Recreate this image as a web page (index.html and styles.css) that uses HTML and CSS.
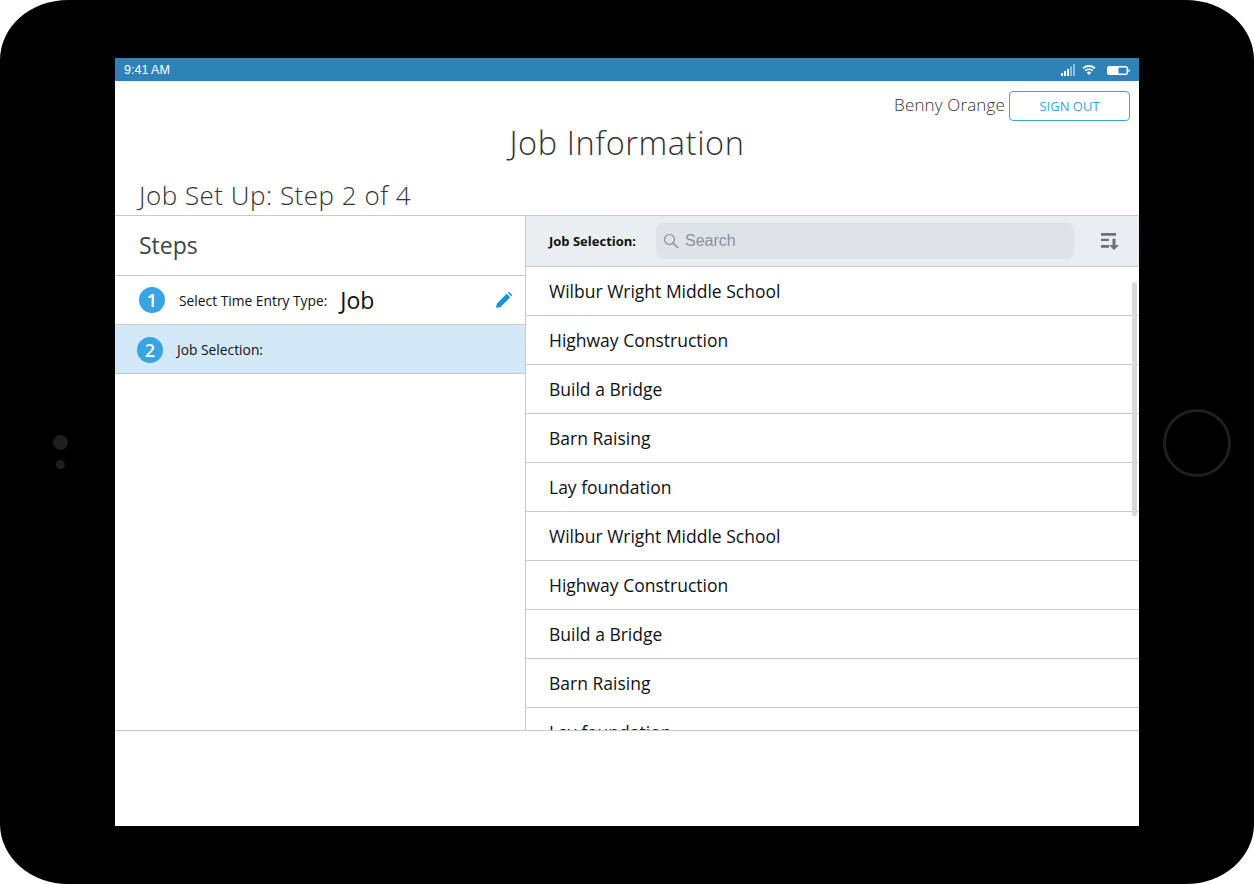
FILE: index.html
```html
<!DOCTYPE html>
<html lang="en">
<head>
<meta charset="utf-8">
<title>Job Information</title>
<link rel="stylesheet" href="styles.css">
</head>
<body>
<div class="device">
  <span class="camera"></span>
  <span class="sensor"></span>
  <span class="home"></span>
  <div class="screen">
    <div class="status">
      <span class="time">9:41 AM</span>
      <div class="status-icons">
        <svg class="signal" width="15" height="12" viewBox="0 0 15 12"><rect x="0" y="9" width="2" height="3" fill="#fff"/><rect x="3" y="7" width="2" height="5" fill="#fff"/><rect x="6" y="5" width="2" height="7" fill="#fff"/><rect x="9" y="2.500" width="2" height="9.500" fill="#8fbcd9"/><rect x="12" y="0" width="2" height="12" fill="#8fbcd9"/></svg>
        <svg class="wifi" width="14" height="10" viewBox="0 0 14 10"><path d="M7 10 4.800 7.400a3.400 3.400 0 0 1 4.400 0ZM3.800 6.300 2.700 5a6.600 6.600 0 0 1 8.600 0l-1.100 1.300a5 5 0 0 0-6.400 0ZM1.700 3.900.5 2.500a10 10 0 0 1 13 0l-1.200 1.400a8.200 8.200 0 0 0-10.600 0Z" fill="#fff"/></svg>
        <svg class="battery" width="23" height="9" viewBox="0 0 23 9"><rect x="0" y="0" width="21" height="9" rx="2.500" fill="#fff"/><rect x="11.500" y="1.500" width="8" height="6" fill="#2d83b8"/><path d="M21.500 2.700c.9.200 1.300.9 1.300 1.800s-.4 1.600-1.300 1.800Z" fill="#fff"/></svg>
      </div>
    </div>
    <div class="top">
      <div class="user">
        <span class="user-name">Benny Orange</span>
        <button class="signout">SIGN OUT</button>
      </div>
      <h1 class="title">Job Information</h1>
      <h2 class="subtitle">Job Set Up: Step 2 of 4</h2>
    </div>
    <div class="main">
      <aside class="steps">
        <div class="steps-head">Steps</div>
        <div class="step">
          <span class="badge">1</span>
          <span class="step-label">Select Time Entry Type:</span>
          <span class="step-value">Job</span>
          <svg class="pencil" width="16" height="16" viewBox="0 0 16 16"><path d="M0 16 1 11.500 10.700 1.800 14.200 5.300 4.500 15ZM11.700.8 12.300.2a.8.8 0 0 1 1.100 0l2.400 2.400a.8.8 0 0 1 0 1.100l-.6.600Z" fill="#0f94d9"/></svg>
        </div>
        <div class="step step-active">
          <span class="badge">2</span>
          <span class="step-label">Job Selection:</span>
        </div>
      </aside>
      <section class="jobs">
        <div class="toolbar">
          <span class="toolbar-label">Job Selection:</span>
          <div class="search">
            <svg width="16" height="16" viewBox="0 0 16 16"><circle cx="6.500" cy="6.500" r="5" fill="none" stroke="#8e9298" stroke-width="1.200"/><path d="M10.200 10.200 15 15" stroke="#8e9298" stroke-width="1.400"/></svg>
            <span class="search-text">Search</span>
          </div>
          <svg class="sort" width="18" height="17" viewBox="0 0 18 17"><path d="M0 0h15v2.700H0ZM0 5.700h8V8H0ZM0 12h8v2.700H0ZM11.500 5.700h3V12H18l-5 5-5-5h3.500Z" fill="#6d7278"/></svg>
        </div>
        <div class="list">
          <div class="row">Wilbur Wright Middle School</div>
          <div class="row">Highway Construction</div>
          <div class="row">Build a Bridge</div>
          <div class="row">Barn Raising</div>
          <div class="row">Lay foundation</div>
          <div class="row">Wilbur Wright Middle School</div>
          <div class="row">Highway Construction</div>
          <div class="row">Build a Bridge</div>
          <div class="row">Barn Raising</div>
          <div class="row">Lay foundation</div>
          <span class="scrollbar"></span>
        </div>
      </section>
    </div>
    <div class="footer"></div>
  </div>
</div>
</body>
</html>
```
FILE: styles.css
```css
* { box-sizing: border-box; }
html, body { margin: 0; padding: 0; background: #fff; }
body { width: 1254px; height: 884px; overflow: hidden; font-family: "Open Sans", "Noto Sans", sans-serif; color: #000; }
.device { position: relative; width: 1254px; height: 884px; padding: 58px 115px; background: #000; border-radius: 68px / 60px; }
.camera, .sensor, .home { position: absolute; border-radius: 50%; }
.camera { left: 53px; top: 435px; width: 15px; height: 15px; background: #1f1f21; }
.sensor { left: 56px; top: 460px; width: 9px; height: 9px; background: #1f1f21; }
.home { left: 1163px; top: 409px; width: 68px; height: 68px; border: 3px solid #1f1f21; }
.screen { display: flex; flex-direction: column; width: 1024px; height: 768px; background: #fff; }
.status { display: flex; align-items: center; justify-content: space-between; height: 23px; padding: 0 9px; background: #2d83b8; color: #fff; }
.time { font-family: "Liberation Sans", sans-serif; font-size: 12.500px; }
.status-icons { display: flex; align-items: center; }
.signal { margin-right: 6px; }
.wifi { margin-right: 11px; margin-top: 1px; }
.battery { margin-top: 1px; }
.top { display: flex; flex-direction: column; height: 135px; border-bottom: 1px solid #c9c9c9; }
.user { display: flex; align-items: center; justify-content: flex-end; gap: 4px; height: 30px; margin-top: 10px; padding-right: 9px; }
.user-name { position: relative; top: -2px; font-size: 17px; font-weight: 300; color: #333; letter-spacing: .15px; }
.signout { width: 121px; height: 30px; padding: 0; background: #fff; border: 1px solid #3ba3e2; border-radius: 4px; color: #3ba3e2; font: 400 13px "Open Sans", sans-serif; }
.title { margin: 0; height: 44px; line-height: 44px; text-align: center; font-size: 32.500px; font-weight: 300; color: #333; letter-spacing: .6px; }
.subtitle { margin: 13px 0 0 24px; height: 34px; line-height: 34px; font-size: 26px; font-weight: 300; color: #333; letter-spacing: .5px; }
.main { display: flex; height: 515px; border-bottom: 1px solid #c9c9c9; }
.steps { width: 411px; flex: none; border-right: 1px solid #c9c9c9; }
.steps-head { height: 60px; padding-left: 24px; line-height: 58px; font-size: 23px; color: #444; border-bottom: 1px solid #c9c9c9; }
.step { display: flex; align-items: center; height: 49px; padding: 0 13px 0 24px; border-bottom: 1px solid #c9c9c9; }
.badge { display: flex; align-items: center; justify-content: center; flex: none; width: 26px; height: 26px; border-radius: 50%; background: #3aa3e3; color: #fff; font-size: 18px; font-weight: 600; }
.step-label { margin-left: 14px; font-size: 13.800px; color: #111; }
.step-value { margin-left: 13px; line-height: 46px; height: 46px; font-size: 23px; color: #111; }
.pencil { margin-left: auto; }
.step-active { padding-left: 22px; padding-top: 1px; background: #d4e9f7; }
.jobs { position: relative; flex: 1; min-width: 0; display: flex; flex-direction: column; }
.toolbar { display: flex; align-items: center; height: 51px; flex: none; padding: 0 20px 0 23px; background: #ebeef1; border-bottom: 1px solid #c9c9c9; }
.toolbar-label { width: 107px; font-size: 13px; font-weight: 700; color: #111; }
.search { display: flex; align-items: center; gap: 6px; width: 418px; height: 36px; padding-left: 7px; background: #dfe2e6; border-radius: 8px; }
.search-text { font-family: "Liberation Sans", sans-serif; font-size: 16px; color: #8e9298; }
.sort { margin-left: auto; }
.list { position: relative; flex: 1; min-height: 0; overflow: hidden; }
.row { height: 49px; padding-left: 23px; line-height: 48px; font-size: 17.500px; color: #111; border-bottom: 1px solid #c9c9c9; }
.scrollbar { position: absolute; right: 2px; top: 15px; width: 5px; height: 234px; border-radius: 3px; background: #d9d9d9; }
.footer { flex: 1; background: #fff; }
```
